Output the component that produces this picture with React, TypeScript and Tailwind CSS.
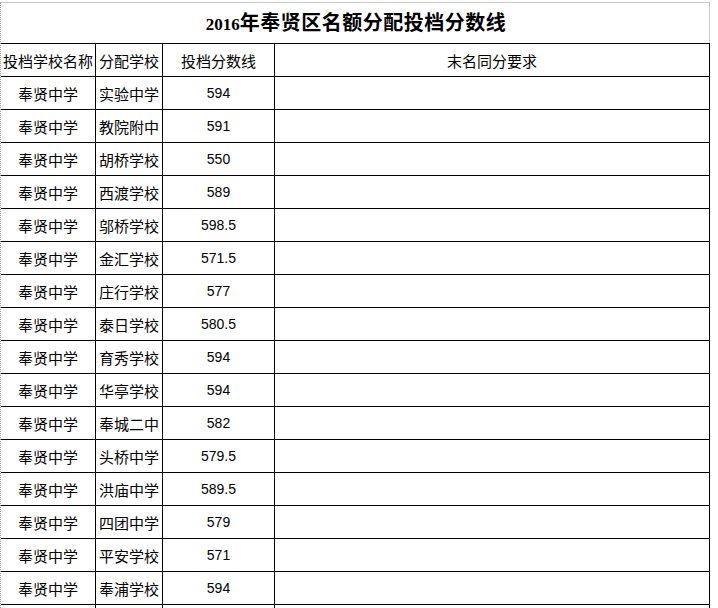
import React from "react";

const rows: [string, string, string][] = [
  ["奉贤中学", "实验中学", "594"],
  ["奉贤中学", "教院附中", "591"],
  ["奉贤中学", "胡桥学校", "550"],
  ["奉贤中学", "西渡学校", "589"],
  ["奉贤中学", "邬桥学校", "598.5"],
  ["奉贤中学", "金汇学校", "571.5"],
  ["奉贤中学", "庄行学校", "577"],
  ["奉贤中学", "泰日学校", "580.5"],
  ["奉贤中学", "育秀学校", "594"],
  ["奉贤中学", "华亭学校", "594"],
  ["奉贤中学", "奉城二中", "582"],
  ["奉贤中学", "头桥中学", "579.5"],
  ["奉贤中学", "洪庙中学", "589.5"],
  ["奉贤中学", "四团中学", "579"],
  ["奉贤中学", "平安学校", "571"],
  ["奉贤中学", "奉浦学校", "594"],
  ["", "", ""],
];

const cjk = { fontFamily: '"Noto Sans CJK SC", "Noto Sans", sans-serif' };
const num = { fontFamily: '"Liberation Sans", Arial, sans-serif' };

export default function App() {
  return (
    <div className="w-[718px] h-[608px] overflow-hidden bg-white">
      <div className="w-[710px] h-[608px] border-l border-dotted border-l-[#9a9a9a]">
        <div className="mt-[2px] h-[41px] border-t border-r border-[#c8c8c8] flex items-center justify-center pl-[2px]">
          <span
            className="font-bold text-[20px] text-black tracking-[0.5px] leading-none"
            style={{ fontFamily: '"Liberation Serif", "Noto Sans CJK SC", serif' }}
          >
            <span className="text-[17px] tracking-normal">2016</span>年奉贤区名额分配投档分数线
          </span>
        </div>
        <div className="border-t border-black">
          <div className="flex h-[33px] border-b border-black text-[15px] text-black leading-none" style={cjk}>
            <div className="w-[95px] border-r border-black flex items-center justify-center">投档学校名称</div>
            <div className="w-[67px] border-r border-black flex items-center justify-center">分配学校</div>
            <div className="w-[112px] border-r border-black flex items-center justify-center">投档分数线</div>
            <div className="w-[435px] border-r border-black flex items-center justify-center">末名同分要求</div>
          </div>
          {rows.map((r, i) => (
            <div key={i} className="flex h-[33px] border-b border-black text-[15px] text-black leading-none">
              <div className="w-[95px] border-r border-black flex items-center justify-center" style={cjk}>{r[0]}</div>
              <div className="w-[67px] border-r border-black flex items-center justify-center" style={cjk}>{r[1]}</div>
              <div className="w-[112px] border-r border-black flex items-center justify-center text-[14px]" style={num}>{r[2]}</div>
              <div className="w-[435px] border-r border-black" />
            </div>
          ))}
        </div>
      </div>
    </div>
  );
}
